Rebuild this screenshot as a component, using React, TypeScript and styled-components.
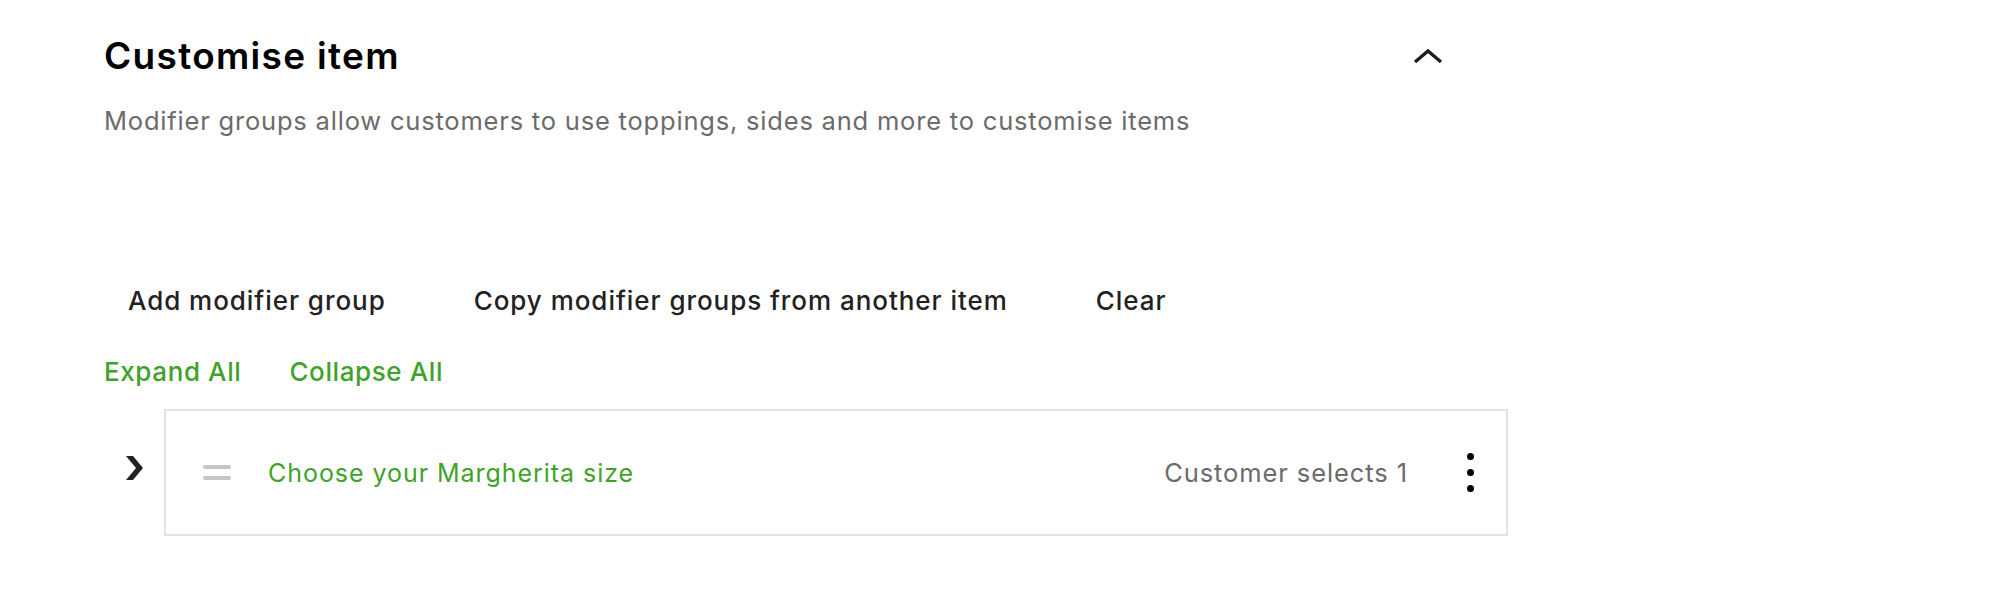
import React from 'react'
import styled, { createGlobalStyle } from 'styled-components'

const GlobalStyle = createGlobalStyle`
	body {
		margin: 0;
		background: #ffffff;
		font-family: Inter, 'Noto Sans', sans-serif;
		color: #000;
	}
`

const Page = styled.div`
	padding: 34px 0 0 104px;
	width: 1404px;
`

const Header = styled.div`
	display: flex;
	align-items: flex-start;
	justify-content: space-between;
	width: 1344px;
`

const Title = styled.h2`
	margin: 0;
	font-size: 37px;
	line-height: 44px;
	font-weight: 600;
	letter-spacing: 1.3px;
	color: #000;
`

const IconButton = styled.button`
	display: flex;
	align-items: center;
	justify-content: center;
	width: 40px;
	height: 44px;
	padding: 0;
	border: none;
	background: none;
	cursor: pointer;
	color: #1f1f1f;
`

const Subtitle = styled.p`
	margin: 27px 0 0;
	font-size: 25.5px;
	line-height: 32px;
	letter-spacing: 0.8px;
	color: #6b6b6b;
`

const Toolbar = styled.div`
	display: flex;
	gap: 40px;
	margin-top: 135px;
	height: 56px;
`

const ToolButton = styled.button`
	display: flex;
	align-items: center;
	padding: 0 24px;
	border: none;
	background: none;
	font-family: inherit;
	font-size: 26px;
	font-weight: 500;
	letter-spacing: 0.95px;
	color: #222;
	cursor: pointer;
`

const LinkRow = styled.div`
	display: flex;
	gap: 48px;
	margin-top: 28px;
`

const GreenLink = styled.button`
	padding: 0;
	border: none;
	background: none;
	font-family: inherit;
	font-size: 26px;
	line-height: 32px;
	font-weight: 500;
	letter-spacing: 0.6px;
	color: #3fa32a;
	cursor: pointer;
`

const GroupRow = styled.div`
	display: flex;
	align-items: stretch;
	margin-top: 21px;
`

const Toggle = styled.div`
	display: flex;
	align-items: center;
	justify-content: center;
	width: 60px;
	padding-bottom: 10px;
	color: #222;
`

const Card = styled.div`
	flex: 1;
	display: flex;
	align-items: center;
	height: 123px;
	padding: 0 12px 0 37px;
	border: 2px solid #e2e2e2;
`

const Handle = styled.div`
	display: flex;
	flex-direction: column;
	gap: 7px;
	width: 28px;
	margin-right: 37px;

	span {
		display: block;
		height: 4px;
		border-radius: 2px;
		background: #c6c6c6;
	}
`

const GroupName = styled.span`
	flex: 1;
	font-size: 25px;
	letter-spacing: 0.95px;
	color: #3fa32a;
`

const Rule = styled.span`
	font-size: 25.5px;
	letter-spacing: 0.9px;
	color: #6b6b6b;
	margin-right: 38px;
`

const MoreButton = styled.button`
	display: flex;
	flex-direction: column;
	align-items: center;
	gap: 9px;
	width: 48px;
	padding: 0;
	border: none;
	background: none;
	cursor: pointer;

	span {
		width: 7px;
		height: 7px;
		border-radius: 50%;
		background: #000;
	}
`

export default function App() {
	return (
		<>
			<GlobalStyle />
			<Page>
				<Header>
					<Title>Customise item</Title>
					<IconButton aria-label="Collapse section">
						<svg width="30" height="16" viewBox="0 0 30 16">
							<polyline
								points="2,14 15,3 28,14"
								fill="none"
								stroke="currentColor"
								strokeWidth="3.4"
							/>
						</svg>
					</IconButton>
				</Header>
				<Subtitle>
					Modifier groups allow customers to use toppings, sides and more to
					customise items
				</Subtitle>
				<Toolbar>
					<ToolButton>Add modifier group</ToolButton>
					<ToolButton>Copy modifier groups from another item</ToolButton>
					<ToolButton>Clear</ToolButton>
				</Toolbar>
				<LinkRow>
					<GreenLink>Expand All</GreenLink>
					<GreenLink>Collapse All</GreenLink>
				</LinkRow>
				<GroupRow>
					<Toggle>
						<svg width="17" height="24" viewBox="0 0 17 24">
							<polygon points="0,0 7,0 17,12 7,24 0,24 10,12" fill="currentColor" />
						</svg>
					</Toggle>
					<Card>
						<Handle>
							<span />
							<span />
						</Handle>
						<GroupName>Choose your Margherita size</GroupName>
						<Rule>Customer selects 1</Rule>
						<MoreButton aria-label="More">
							<span />
							<span />
							<span />
						</MoreButton>
					</Card>
				</GroupRow>
			</Page>
		</>
	)
}
